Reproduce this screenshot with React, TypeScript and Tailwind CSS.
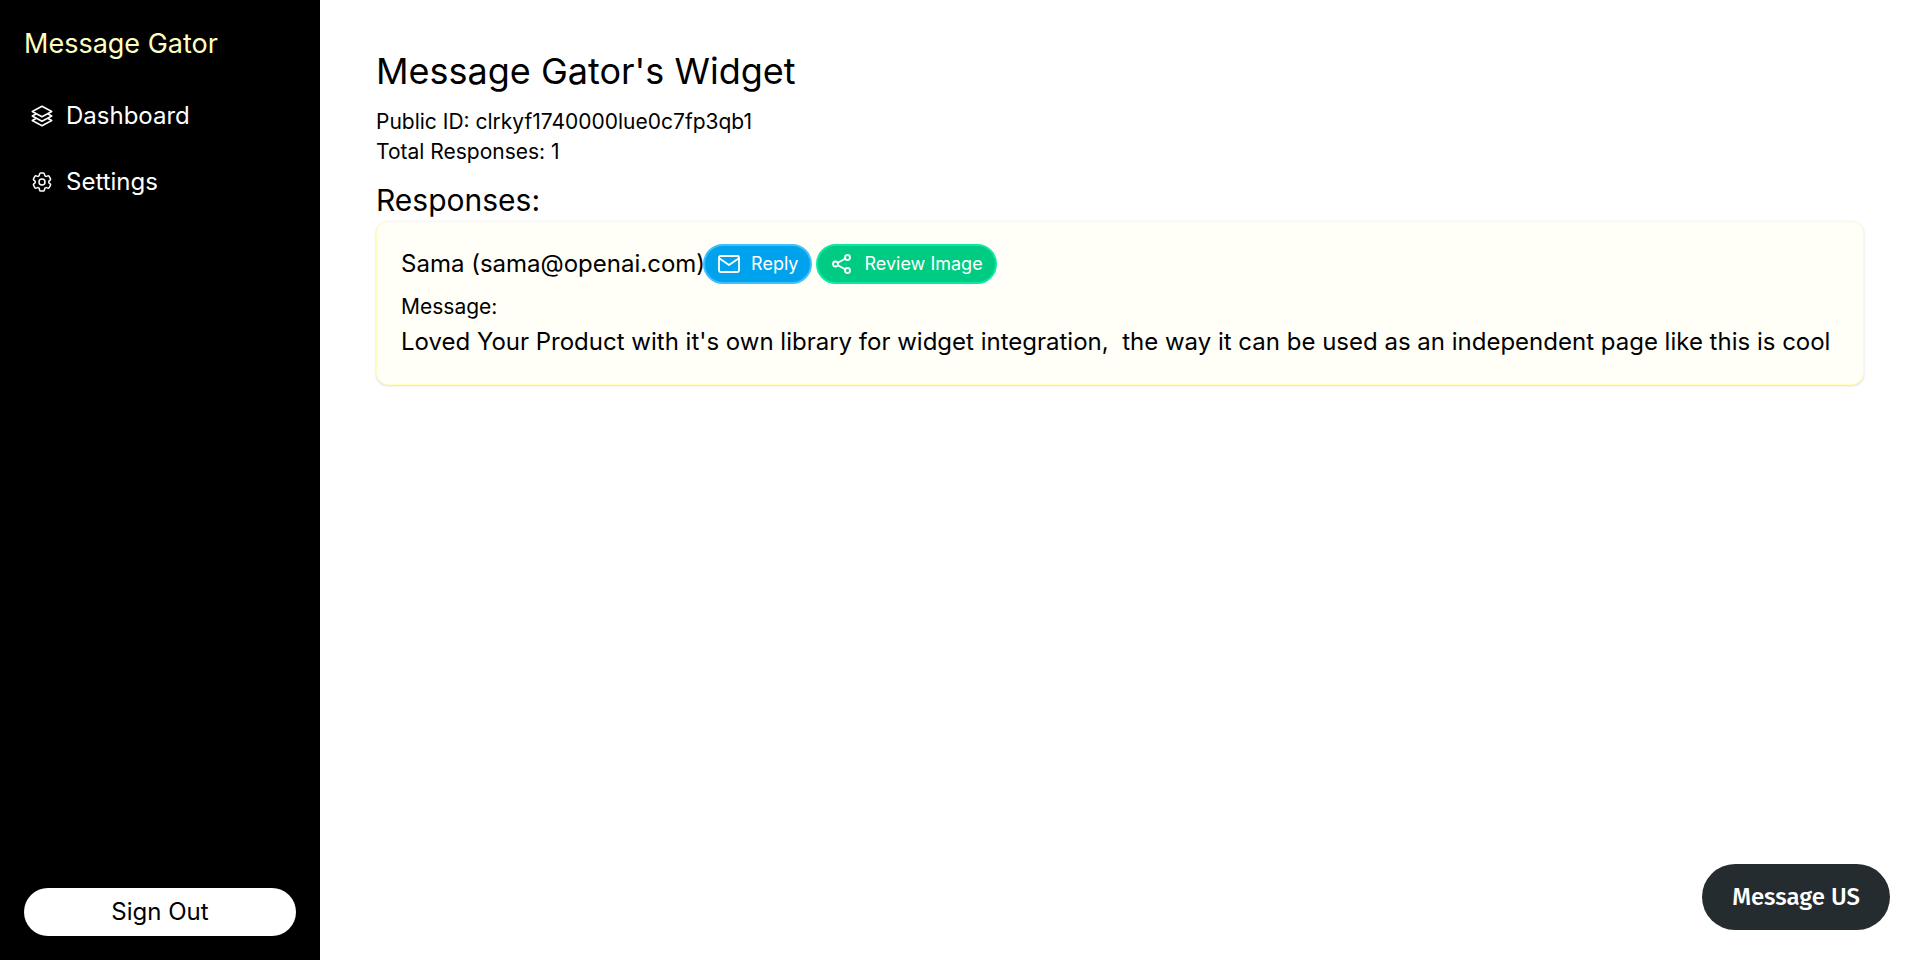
import React from "react";
import { HiOutlineCog6Tooth, HiOutlineSquare3Stack3D } from "react-icons/hi2";

interface ResponseItem {
  name: string;
  email: string;
  message: string;
}

const responses: ResponseItem[] = [
  {
    name: "Sama",
    email: "sama@openai.com",
    message:
      "Loved Your Product with it's own library for widget integration,  the way it can be used as an independent page like this is cool",
  },
];

const navItems = [
  { label: "Dashboard", icon: HiOutlineSquare3Stack3D },
  { label: "Settings", icon: HiOutlineCog6Tooth },
];

const MailIcon: React.FC = () => (
  <svg width="24" height="24" viewBox="0 0 24 24" fill="none" stroke="currentColor" strokeWidth="1.8" strokeLinecap="round" strokeLinejoin="round" aria-hidden="true">
    <rect x="2" y="4" width="20" height="16" rx="1.5" />
    <path d="M2.5 6.5 12 13l9.5-6.5" />
  </svg>
);

const ShareIcon: React.FC = () => (
  <svg width="24" height="24" viewBox="0 0 24 24" fill="none" stroke="currentColor" strokeWidth="1.8" strokeLinecap="round" aria-hidden="true">
    <circle cx="17.5" cy="5.5" r="2.5" />
    <circle cx="5.5" cy="12" r="2.5" />
    <circle cx="17.5" cy="18.5" r="2.5" />
    <path d="M7.8 10.8 15.2 6.7M7.8 13.2l7.4 4.1" />
  </svg>
);

const Sidebar: React.FC = () => (
  <aside className="flex w-80 shrink-0 flex-col bg-black px-6 pb-6 pt-[26px]">
    <span className="text-[27px] leading-9 text-[#fdffc0]">Message Gator</span>
    <nav className="mt-[30px] flex flex-col gap-[18px]">
      {navItems.map(({ label, icon: Icon }) => (
        <a key={label} href="#" className="flex h-12 items-center gap-3 px-1.5 text-2xl text-white">
          <Icon size={24} />
          {label}
        </a>
      ))}
    </nav>
    <button type="button" className="mt-auto h-12 rounded-full bg-white text-2xl text-black">
      Sign Out
    </button>
  </aside>
);

const ResponseCard: React.FC<{ response: ResponseItem }> = ({ response }) => (
  <article className="rounded-xl border border-[#fdffba] bg-[#fffff8] px-6 pb-[25px] pt-[22px] shadow-sm">
    <div className="flex items-center">
      <span className="text-2xl">
        {response.name} ({response.email})
      </span>
      <div className="-ml-0.5 flex gap-1 text-lg text-white">
        <button type="button" className="flex h-10 items-center gap-2.5 rounded-full border-2 border-[#40c0fa] bg-[#00a2ee] px-3">
          <MailIcon />
          Reply
        </button>
        <button type="button" className="flex h-10 items-center gap-2.5 rounded-full border-2 border-[#0ce8a4] bg-[#00cb82] px-3">
          <ShareIcon />
          Review Image
        </button>
      </div>
    </div>
    <p className="mt-2.5 text-[21px] leading-[26px]">Message:</p>
    <p className="mt-[5px] whitespace-pre-wrap text-2xl leading-[34px]">{response.message}</p>
  </article>
);

export default function App() {
  return (
    <div className="flex min-h-screen bg-white font-['Inter',sans-serif] text-black">
      <Sidebar />
      <main className="min-w-0 grow pb-14 pl-14 pr-[54px] pt-[49px]">
        <h1 className="text-4xl leading-[44px]">Message Gator's Widget</h1>
        <div className="mt-3.5 text-[21px] leading-[30px]">
          <p>Public ID: clrkyf1740000lue0c7fp3qb1</p>
          <p>Total Responses: {responses.length}</p>
        </div>
        <h2 className="mt-[13px] text-3xl leading-[41px]">Responses:</h2>
        {responses.map((response) => (
          <ResponseCard key={response.email} response={response} />
        ))}
      </main>
      <button
        type="button"
        className="fixed bottom-[30px] right-7 h-[66px] rounded-full bg-[#242c2f] px-[30px] font-['Fira_Sans','Roboto',sans-serif] text-2xl font-medium text-white"
      >
        Message US
      </button>
    </div>
  );
}
